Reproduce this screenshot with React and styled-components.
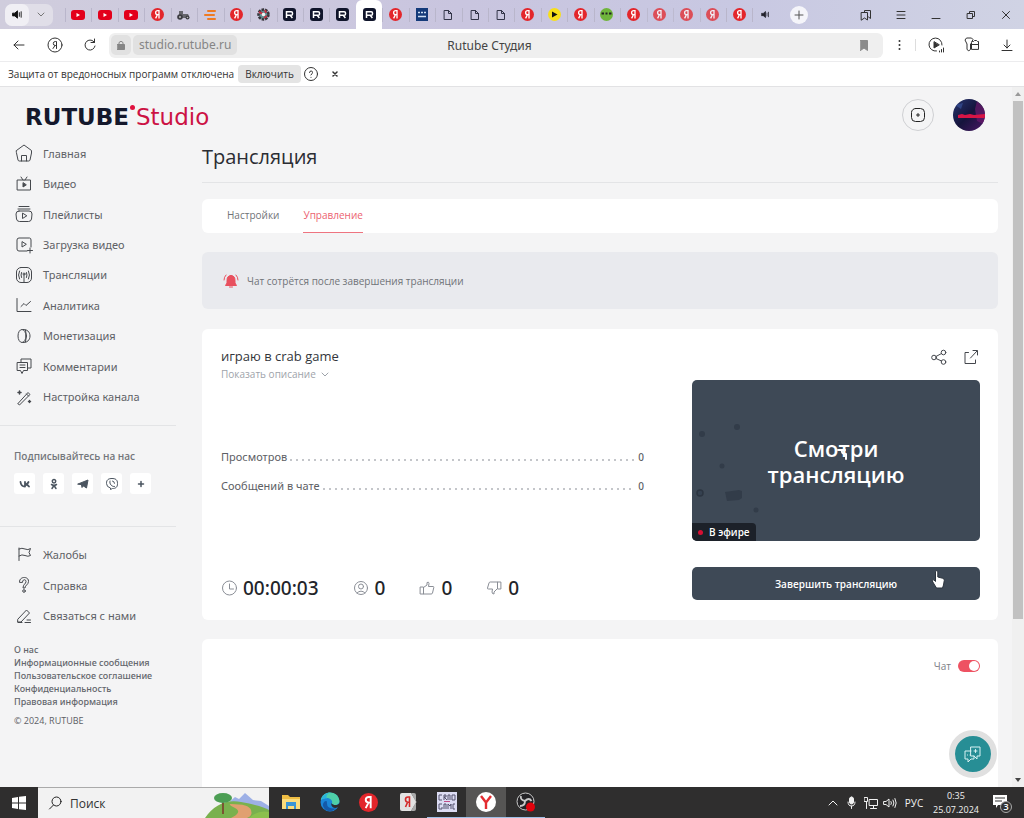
import React from "react";
import styled, { createGlobalStyle, css } from "styled-components";

const GlobalStyle = createGlobalStyle`
  *, *::before, *::after { box-sizing: border-box; }
  html, body { margin: 0; height: 100%; overflow: hidden; }
  body { font-family: "Open Sans", "Noto Sans", sans-serif; font-size: 12px; color: #5d6065; background: #f4f4f5; }
  button, input { font: inherit; color: inherit; }
  button { background: none; border: 0; padding: 0; cursor: pointer; }
  a { color: inherit; text-decoration: none; }
  h1, h2, h3, p, ul, dl, dd { margin: 0; padding: 0; font-weight: inherit; }
  ul { list-style: none; }
  svg { display: block; flex: none; }
`;

const wideSans = `"Noto Sans", "Open Sans", sans-serif`;

/* ---------- shared ---------- */

const Svg = ({ size = 18, w, h, box, width = 1, fill = "none", stroke = "currentColor", children }) => (
  <svg
    width={w || size}
    height={h || size}
    viewBox={box || `0 0 ${w || size} ${h || size}`}
    fill={fill}
    stroke={stroke}
    strokeWidth={width}
    strokeLinecap="round"
    strokeLinejoin="round"
    aria-hidden="true"
  >
    {children}
  </svg>
);

const Screen = styled.div`
  display: flex;
  flex-direction: column;
  height: 100vh;
  background: #f4f4f5;
`;

/* ---------- browser tabs ---------- */

const TabStrip = styled.div`
  display: flex;
  flex: none;
  height: 29px;
  align-items: center;
  padding-right: 1px;
  background: linear-gradient(90deg, #d0cddd 0%, #c9c5df 45%, #c8c8e2 72%, #d0d3e4 100%);
`;

const SoundGroup = styled.div`
  display: flex;
  flex: none;
  width: 48px;
  height: 22px;
  margin: 0 12px 0 5px;
  border-radius: 7px;
  background: #e0dee8;
  color: #222;
`;

const SoundButton = styled.button`
  display: grid;
  place-items: center;
  flex: 1;
  border-radius: 7px;
  color: ${(p) => (p.$on ? "#111" : "#777")};
  background: ${(p) => (p.$on ? "#f0eff4" : "transparent")};
`;

const TabList = styled.div`
  display: flex;
  flex: 1;
  height: 29px;
`;

const Tab = styled.button`
  display: grid;
  place-items: center;
  flex: 1;
  min-width: 0;
  color: #22222c;
  opacity: ${(p) => (p.$faded ? 0.75 : 1)};
  background: linear-gradient(#b9b6cb, #b9b6cb) no-repeat left center / 1px 14px;
  ${(p) =>
    p.$active &&
    css`
      background: #fff;
      border-radius: 6px 6px 0 0;
    `}
`;

const NewTab = styled.button`
  display: grid;
  place-items: center;
  flex: none;
  width: 18px;
  height: 18px;
  margin: 0 40px 0 11px;
  border-radius: 50%;
  background: #f5f5fa;
  color: #555;
`;

const WindowButton = styled.button`
  display: grid;
  place-items: center;
  flex: none;
  width: 35px;
  height: 29px;
  color: #333;
`;

const YaIcon = ({ size = 13 }) => (
  <svg width={size} height={size} viewBox="0 0 13 13" aria-hidden="true">
    <circle cx="6.500" cy="6.500" r="6.500" fill="#e3262b" />
    <path d="M8 10.400V2.700H6.800C5.300 2.700 4.600 3.500 4.600 4.700S5.300 6.600 6.800 6.600H8M6.400 6.700L4.600 10.400" fill="none" stroke="#fff" strokeWidth="1.300" />
  </svg>
);

const TubeIcon = () => (
  <svg width="14" height="10" viewBox="0 0 14 10" aria-hidden="true">
    <rect width="14" height="10" rx="3" fill="#e3001b" />
    <path d="M5.500 3v4l3.500-2z" fill="#fff" />
  </svg>
);

const RIcon = () => (
  <svg width="13" height="13" viewBox="0 0 13 13" aria-hidden="true">
    <rect width="13" height="13" rx="3" fill="#10152b" />
    <path d="M3.500 10V3.800h4.700q1.300 0 1.300 1.300v.8q0 1.300-1.300 1.300H3.500M7.200 7.300L9.400 10" fill="none" stroke="#fff" strokeWidth="1.500" />
  </svg>
);

const FileIcon = () => (
  <Svg w={10} h={12} stroke="#333548">
    <path d="M1.500 1.500h4l3 3v6h-7zM5.500 1.500v3h3" />
  </Svg>
);

const TractorIcon = () => (
  <svg width="13" height="10" viewBox="0 0 13 10" aria-hidden="true">
    <path d="M2 1h4v3h5l1 2v2H2z" fill="#66666c" />
    <circle cx="3" cy="7" r="2.800" fill="#3c3c42" />
    <circle cx="10.500" cy="7.500" r="2" fill="#3c3c42" />
    <circle cx="3" cy="7" r="1" fill="#bbb" />
    <circle cx="10.500" cy="7.500" r=".8" fill="#bbb" />
  </svg>
);

const StripesIcon = () => (
  <Svg w={12} h={12} stroke="#ee7a22" width={2}>
    <path d="M4 2h7M1 6h9M4 10h7" />
  </Svg>
);

const GearIcon = () => (
  <svg width="13" height="13" viewBox="0 0 13 13" aria-hidden="true">
    <circle cx="6.500" cy="6.500" r="5" fill="#5f8f93" stroke="#38343b" strokeWidth="2.500" strokeDasharray="2.500 1" />
    <path d="M2 4l4 2M8 2l1 3M7 10l3-2" stroke="#c33244" strokeWidth="2" />
    <circle cx="6.500" cy="6.500" r="1.800" fill="#f2f2f2" />
  </svg>
);

const BlueIcon = () => (
  <svg width="12" height="13" viewBox="0 0 12 13" aria-hidden="true">
    <rect width="12" height="13" fill="#143a7a" />
    <path d="M2 4.500h2M5 4.500h2M8 4.500h2M2 8.500h8" stroke="#cfe0f5" strokeWidth="1.500" />
  </svg>
);

const PlayYellow = () => (
  <svg width="13" height="13" viewBox="0 0 13 13" aria-hidden="true">
    <circle cx="6.500" cy="6.500" r="6.500" fill="#f8df1a" />
    <path d="M4 3.500v6l5.500-3z" fill="#111" />
  </svg>
);

const GreenIcon = () => (
  <svg width="13" height="13" viewBox="0 0 13 13" aria-hidden="true">
    <circle cx="6.500" cy="6.500" r="6.500" fill="#6fb53c" />
    <path d="M1.500 5.500h2.500M5.500 5.500h2M9 5.500h2.500" stroke="#222" strokeWidth="1.800" />
  </svg>
);

const SpeakerIcon = ({ size = 11 }) => (
  <Svg size={size} box="0 0 12 12">
    <path d="M1 4.500h2L6 2v8L3 7.500H1z" fill="currentColor" />
    <path d="M8 4v4M10 3v6" />
  </Svg>
);

const SmallSpeaker = () => <SpeakerIcon size={9} />;

const TABS = [
  ["YouTube", TubeIcon], ["YouTube", TubeIcon], ["YouTube", TubeIcon], ["Яндекс", YaIcon],
  ["Трактор", TractorIcon], ["Лента", StripesIcon], ["Яндекс", YaIcon], ["Настройки", GearIcon],
  ["Rutube", RIcon], ["Rutube", RIcon], ["Rutube", RIcon], ["Rutube Студия", RIcon, "active"],
  ["Яндекс", YaIcon], ["Сайт", BlueIcon], ["Файл", FileIcon], ["Файл", FileIcon], ["Файл", FileIcon],
  ["Яндекс", YaIcon], ["Музыка", PlayYellow], ["Яндекс", YaIcon], ["Игра", GreenIcon],
  ["Яндекс", YaIcon], ["Яндекс", YaIcon, "faded"], ["Яндекс", YaIcon, "faded"],
  ["Яндекс", YaIcon, "faded"], ["Яндекс", YaIcon], ["Звук", SmallSpeaker],
];

/* ---------- address bar ---------- */

const Toolbar = styled.div`
  display: flex;
  flex: none;
  align-items: center;
  height: 33px;
  background: #fff;
  border-bottom: 1px solid #ececee;
  color: #333;
`;

const ToolButton = styled.button`
  display: grid;
  place-items: center;
  flex: none;
  width: ${(p) => p.$w || 35}px;
  height: 28px;
`;

const AddressBar = styled.div`
  display: grid;
  grid-template-columns: 1fr auto 1fr;
  align-items: center;
  flex: 1;
  height: 25px;
  margin-left: 2px;
  padding: 0 15px 0 2px;
  border-radius: 6px;
  background: #efefef;
`;

const AddressStart = styled.div`
  display: flex;
  gap: 2px;
`;

const Chip = styled.button`
  display: grid;
  place-items: center;
  height: 20px;
  padding: 0 6px;
  border-radius: 5px;
  background: #e1e1e1;
  color: #858585;
  font-family: ${wideSans};
  font-size: 12px;
  line-height: 18px;
`;

const PageTitle = styled.span`
  font-family: ${wideSans};
  font-size: 12px;
  color: #444;
`;

const AddressEnd = styled.button`
  justify-self: end;
  color: #8b8b8b;
`;

const ToolDivider = styled.span`
  width: 1px;
  height: 12px;
  background: #ddd;
`;

const Notice = styled.div`
  display: flex;
  flex: none;
  align-items: center;
  height: 25px;
  padding-left: 8px;
  background: #fff;
  border-bottom: 1px solid #e2e2e4;
  color: #333;
  font-size: 10px;
`;

const NoticeButton = styled.button`
  height: 18px;
  margin: 0 3px 0 4px;
  padding: 0 7px;
  border-radius: 4px;
  background: #e4e4e4;
  line-height: 18px;
`;

const NoticeIconButton = styled.button`
  display: grid;
  place-items: center;
  width: ${(p) => p.$w}px;
  height: 18px;
`;

/* ---------- studio page ---------- */

const Viewport = styled.div`
  position: relative;
  display: flex;
  flex: 1;
  min-height: 0;
  overflow: hidden;
`;

const Page = styled.div`
  flex: 1;
  min-width: 0;
  height: 100%;
  overflow: hidden;
`;

const Header = styled.header`
  display: flex;
  align-items: center;
  gap: 19px;
  padding: 12px 27px 0 25px;
  height: 44px;
`;

const Logo = styled.a`
  display: flex;
  align-items: center;
  margin-right: auto;
  padding-top: 4px;
  font: bold 23px/24px "DejaVu Sans", sans-serif;
  color: #14182c;
`;

const LogoDot = styled.span`
  width: 5px;
  height: 5px;
  margin: 0 1px 20px;
  border-radius: 50%;
  background: #e0123f;
`;

const LogoStudio = styled.span`
  font-weight: 400;
  color: #cc1244;
`;

const RoundButton = styled.button`
  display: grid;
  place-items: center;
  width: 32px;
  height: 32px;
  border-radius: 50%;
  border: ${(p) => (p.$bare ? "0" : "1px solid #cfd0d3")};
  color: #222;
  overflow: hidden;
`;

const Columns = styled.div`
  display: grid;
  grid-template-columns: 202px minmax(0, 1fr);
  padding-right: 14px;
`;

const Sidebar = styled.aside`
  width: 176px;
  padding-top: 7px;
`;

const NavList = styled.ul`
  display: flex;
  flex-direction: column;
  height: ${(p) => p.$h}px;
`;

const NavItem = styled.li`
  display: flex;
  flex: 1;
`;

const NavLink = styled.a`
  display: flex;
  align-items: center;
  gap: 10px;
  padding-left: 15px;
  color: #5e6166;
  font-family: ${wideSans};
  font-size: 11px;
  svg { color: #45484d; }
`;

const Social = styled.section`
  height: 102px;
  margin: 13px 0 12px;
  padding: 23px 0 0 14px;
  border: solid #e3e4e6;
  border-width: 1px 0;
`;

const SocialTitle = styled.h3`
  font-size: 10px;
  line-height: 14px;
  font-weight: 600;
  color: #74777c;
`;

const SocialRow = styled.div`
  display: flex;
  gap: 8px;
  margin-top: 10px;
`;

const SocialLink = styled.a`
  display: grid;
  place-items: center;
  width: 21px;
  height: 21px;
  border-radius: 3px;
  background: #fff;
  color: #4b5560;
`;

const FooterLinks = styled.ul`
  margin: 12px 0 6px 14px;
  font-family: ${wideSans};
  font-size: 9px;
  line-height: 13px;
  font-weight: 500;
  color: #63666c;
  white-space: nowrap;
`;

const Copyright = styled.p`
  margin-left: 14px;
  font-size: 9px;
  line-height: 13px;
`;

const Title = styled.h1`
  height: 52px;
  padding-top: 12px;
  border-bottom: 1px solid #e3e4e6;
  font-size: 20px;
  line-height: 28px;
  font-weight: 500;
  color: #2b2d33;
`;

const Card = styled.section`
  border-radius: 6px;
  background: #fff;
`;

const TabsCard = styled(Card).attrs({ as: "nav" })`
  display: flex;
  gap: 24px;
  height: 34px;
  margin-top: 16px;
  padding-left: 25px;
`;

const TabLink = styled.a`
  border-bottom: 1px solid ${(p) => (p.$active ? "#ee7480" : "transparent")};
  color: ${(p) => (p.$active ? "#ec6270" : "#707378")};
  font-size: 10px;
  line-height: 33px;
`;

const Banner = styled.div`
  display: flex;
  align-items: center;
  gap: 8px;
  height: 57px;
  margin: 19px 0 20px;
  padding-left: 21px;
  border-radius: 6px;
  background: #e9eaee;
  color: #707378;
  font-size: 10px;
`;

const StreamCard = styled(Card)`
  display: grid;
  grid-template-columns: minmax(0, 423fr) minmax(0, 288fr);
  gap: 48px;
  height: 291px;
  padding: 18px 18px 19px 19px;
`;

const Info = styled.div`
  display: flex;
  flex-direction: column;
`;

const StreamTitle = styled.h2`
  font-size: 13px;
  line-height: 18px;
  font-weight: 500;
  color: #33363b;
`;

const Describe = styled.button`
  display: flex;
  align-items: center;
  gap: 5px;
  height: 18px;
  color: #9ea3aa;
  font-size: 10px;
`;

const Facts = styled.dl`
  display: grid;
  gap: 11px;
  margin-top: 65px;
  font-family: ${wideSans};
  font-size: 11px;
`;

const Fact = styled.div`
  display: flex;
  line-height: 18px;
`;

const Leader = styled.span`
  flex: 1;
  height: 18px;
  margin: 0 3px 0 2px;
  background: radial-gradient(circle at 2px 12px, #c4c6ca 0 1px, transparent 1px) 0 0 / 6px 18px repeat-x;
`;

const FactValue = styled.dd`
  font-size: 10px;
  font-weight: 500;
`;

const Metrics = styled.ul`
  display: flex;
  gap: 34px;
  margin-top: auto;
`;

const Metric = styled.li`
  display: flex;
  align-items: center;
  gap: 6px;
  font-family: ${wideSans};
  font-size: 19px;
  line-height: 26px;
  font-weight: 500;
  color: #222429;
  svg { color: #8a8e96; }
`;

const Side = styled.div`
  display: flex;
  flex-direction: column;
`;

const Actions = styled.div`
  display: flex;
  justify-content: flex-end;
  gap: 14px;
  height: 33px;
  padding: 1px 0 14px;
  color: #44474d;
`;

const Preview = styled.div`
  position: relative;
  display: grid;
  place-items: center;
  height: 161px;
  border-radius: 5px;
  overflow: hidden;
  background: #3e4956;
  color: #fff;
  text-align: center;
  font-size: 22px;
  line-height: 26px;
  font-weight: 600;
`;

const PreviewArt = styled.div`
  position: absolute;
  left: 4px;
  top: 36px;
`;

const Pointer = styled.span`
  position: absolute;
  left: 145px;
  top: 66px;
`;

const Live = styled.span`
  position: absolute;
  left: 0;
  bottom: 0;
  display: flex;
  align-items: center;
  gap: 6px;
  height: 18px;
  padding: 0 6px;
  border-radius: 0 4px 0 0;
  background: #1c2129;
  font-size: 10px;
  line-height: 18px;
`;

const LiveDot = styled.i`
  width: 5px;
  height: 5px;
  border-radius: 50%;
  background: #d80f33;
`;

const StopButton = styled.button`
  position: relative;
  height: 33px;
  margin-top: 26px;
  border-radius: 5px;
  background: #3e4956;
  color: #fff;
  font-size: 10px;
  font-weight: 600;
`;

const HandCursor = styled.span`
  position: absolute;
  right: 34px;
  top: 2px;
`;

const ChatCard = styled(Card)`
  height: 300px;
  margin-top: 19px;
  padding: 19px 18px;
`;

const ChatToggle = styled.label`
  display: flex;
  justify-content: flex-end;
  align-items: center;
  gap: 7px;
  font-size: 10px;
  line-height: 16px;
  color: #7d8087;
`;

const Switch = styled.input`
  appearance: none;
  display: flex;
  justify-content: flex-end;
  width: 22px;
  height: 12px;
  margin: 0;
  padding: 1px;
  border-radius: 6px;
  background: #ee5262;
  &::before {
    content: "";
    width: 10px;
    height: 10px;
    border-radius: 50%;
    background: #fff;
  }
`;

const Helper = styled.button`
  position: absolute;
  right: 27px;
  bottom: 9px;
  display: grid;
  place-items: center;
  width: 48px;
  height: 48px;
  border: 6px solid #e0e0e0;
  border-radius: 50%;
  background: #278e95;
  color: #d9f2f3;
`;

const Scrollbar = styled.div`
  display: flex;
  flex-direction: column;
  align-items: center;
  flex: none;
  width: 12px;
  background: #f0f0f0;
`;

const Thumb = styled.div`
  flex: 518;
  width: 10px;
  background: #c1c1c1;
`;

const Rest = styled.div`
  flex: 154;
`;

const Arrow = styled.span`
  display: grid;
  place-items: center;
  height: 14px;
  color: ${(p) => (p.$dark ? "#444" : "#999")};
`;

/* ---------- taskbar ---------- */

const Taskbar = styled.footer`
  display: flex;
  flex: none;
  height: 31px;
  background: #2f2e2e;
  color: #f1f1f1;
`;

const Start = styled.button`
  display: grid;
  place-items: center;
  flex: none;
  width: 38px;
`;

const Search = styled.label`
  display: flex;
  align-items: center;
  flex: none;
  gap: 8px;
  width: 231px;
  padding-left: 10px;
  background: #f2f2f2;
  color: #222;
  border-top: 1px solid #aaa;
  overflow: hidden;
`;

const SearchInput = styled.input`
  flex: 1;
  min-width: 0;
  padding: 0;
  border: 0;
  outline: 0;
  background: none;
  font-size: 12px;
  &::placeholder { color: #333; opacity: 1; }
`;

const Apps = styled.div`
  display: flex;
  padding-left: 2px;
`;

const AppButton = styled.button`
  display: grid;
  place-items: center;
  width: ${(p) => (p.$active ? 40 : 39)}px;
  background: ${(p) => (p.$active ? "#565554" : "transparent")};
  border-bottom: 1px solid ${(p) => (p.$open ? "#9dbfe6" : "transparent")};
`;

const Tray = styled.div`
  display: flex;
  align-items: center;
  gap: 4px;
  margin-left: auto;
  padding-right: 6px;
  font-size: 10px;
`;

const TrayButton = styled.button`
  display: grid;
  place-items: center;
  width: ${(p) => p.$w || 15}px;
  height: 31px;
`;

const Clock = styled.time`
  text-align: center;
  line-height: 14px;
  font-size: 9px;
  font-weight: 500;
  width: 50px;
`;

/* ---------- navigation data ---------- */

const NAV = [
  ["Главная", <path d="M1.500 6.500L9 1l7.500 5.500v2.500L15 16q-.3 1-1.300 1H4.300q-1 0-1.300-1L1.500 9zM6.500 17v-5.500h5V17" />],
  ["Видео", <><path d="M2.500 5h13v10h-13zM6 2l2 3M12 2l-2 3" /><path d="M8 8v4l3-2z" fill="currentColor" /></>],
  ["Плейлисты", <><path d="M4 1.500h10M3 4h12" /><path d="M4 6h10q3 0 3 3l-.5 5q-.5 2.500-3 2.500h-9Q2 16.500 1.500 14L1 9q0-3 3-3z" /><path d="M7.500 8.500v5l4-2.500z" /></>],
  ["Загрузка видео", <><path d="M12 15H4q-2 0-2-2V4q0-2 2-2h10.500q1.500 0 1.500 2v7M15 12v5M12.500 14.500h5" /><path d="M7 6v5l4-2.500z" /></>],
  ["Трансляции", <><rect x="1.500" y="1.500" width="15" height="15" rx="4.500" /><path d="M9 9v7M4.500 5q-2 4 0 8M13.500 5q2 4 0 8M6.500 6.500q-1 2.500 0 5M11.500 6.500q1 2.500 0 5" /><circle cx="9" cy="8" r="1" /></>],
  ["Аналитика", <path d="M2 2.500V15.500h14M6 10.500l3-3 2 2 4.500-4" />],
  ["Монетизация", <><ellipse cx="7" cy="9" rx="4" ry="6.500" /><path d="M8 2.500c4-.5 7 2.500 7 6.500s-3 7-7 6.500M10.500 3q2 6 0 12" /></>],
  ["Комментарии", <><path d="M6 5V2h10v9h-3" /><path d="M2.500 5.500h10v8h-4L7 16.500l-1.500-3h-3zM5 8h5M5 10.500h5" /></>],
  ["Настройка канала", <><path d="M3 15.500l10-11 2 2-10 10zM11.500 6l2 2" /><path d="M4.500 3v3M3 4.500h3M14.500 12.500v2M13.500 13.500h2" strokeWidth="1.500" /></>],
];

const SUPPORT = [
  ["Жалобы", <path d="M4 3v12.500M4 4q3-1.500 6 0t5.500-.5l-1.500 4 1.500 3q-2.500 1.500-5.500 0t-6 .5" />],
  ["Справка", <><path d="M4.500 6c-.5-6 9.500-6 9-.5C13.300 9 10 9 10 12H8c0-4 3-4 3-6.500 0-2.500-3.500-2.500-3.500.5z" /><circle cx="9" cy="15" r="1.300" /></>],
  ["Связаться с нами", <path d="M3 12L11.500 3l3 3L6 15H3zM10 15.500h5.500M12 13h3.500M3 15.500h4" />],
];

const LEGAL = ["О нас", "Информационные сообщения", "Пользовательское соглашение", "Конфиденциальность", "Правовая информация"];

const SOCIAL = [
  ["ВКонтакте", <path d="M1.500 4c.3 3 1.700 4.500 4.500 4.500V4M6 6.500c1.500 0 2.800-1 3.500-2.500M6.500 6.500C8.300 6.800 9.300 7.500 10 8.500" strokeWidth="1.800" />],
  ["Одноклассники", <path d="M6 1.500a1.700 1.700 0 100 3.400 1.700 1.700 0 000-3.400M3.500 6.500q2.500 1.500 5 0M6 7.500L4 10.500M6 7.500l2 3" strokeWidth="1.500" />],
  ["Telegram", <path d="M1 6l10-4-1.500 8L6.500 8 5 9.500 4.500 7z" fill="currentColor" />],
  ["Viber", <><path d="M6 .5c3.500 0 5.500 1 5.500 5s-2 5-5 5L4.500 11.500V10Q.5 9 .5 5.500c0-4 2-5 5.500-5z" /><path d="M4 3c-1 3 2 6 4.500 5.500M6.500 3q2 .3 2 2.300" /></>],
  ["Ещё", <path d="M6 3.500v5M3.500 6h5" strokeWidth="1.500" />],
];

const METRICS = [
  ["00:00:03", <><circle cx="8.500" cy="8" r="7" /><path d="M8.500 4v5h4" /></>],
  ["0", <><circle cx="8" cy="8" r="6.500" /><circle cx="8" cy="6.500" r="2.500" /><path d="M4 13q4-4 8 0" /></>],
  ["0", <path d="M1.500 7h3v7h-3zM4.500 7.500L8 5V2.500q2-1 2 1L9.500 6.500H14q1 0 .8 1L13.500 13q-.3 1-1.300 1H4.500" />],
  ["0", <path d="M14.500 9h-3V2h3zM11.500 8.500L8 12v2q-2 0-2-2l.5-3H2.500q-1.300 0-1-1L3 3q.3-1 1.300-1h7.200" />],
];

const NavGroup = ({ items, height }) => (
  <NavList $h={height}>
    {items.map(([label, art]) => (
      <NavItem key={label}>
        <NavLink href="#">
          <Svg>{art}</Svg>
          {label}
        </NavLink>
      </NavItem>
    ))}
  </NavList>
);

const BrowserChrome = () => (
  <>
    <TabStrip>
      <SoundGroup>
        <SoundButton $on aria-label="Звук"><SpeakerIcon /></SoundButton>
        <SoundButton aria-label="Вкладки"><Svg w={8} h={5}><path d="M1 1l3 3 3-3" /></Svg></SoundButton>
      </SoundGroup>
      <TabList>
        {TABS.map(([name, Icon, state], i) => (
          <Tab key={i} aria-label={name} $active={state === "active"} $faded={state === "faded"}>
            <Icon />
          </Tab>
        ))}
      </TabList>
      <NewTab aria-label="Новая вкладка"><Svg size={10}><path d="M5 1v8M1 5h8" /></Svg></NewTab>
      <WindowButton aria-label="Закладки"><Svg size={12}><path d="M4.500 3V1.500h6v8L8.500 8M1.500 3.500h6v7.500L4.500 9l-3 2z" /></Svg></WindowButton>
      <WindowButton aria-label="Меню"><Svg size={10}><path d="M1 1.500h8M1 5h8M1 8.500h8" /></Svg></WindowButton>
      <WindowButton aria-label="Свернуть"><Svg size={10}><path d="M1 8.500h8" /></Svg></WindowButton>
      <WindowButton aria-label="Развернуть"><Svg size={10}><path d="M1.500 3.500h5v5h-5zM3.500 3.500v-2h5v5h-2" /></Svg></WindowButton>
      <WindowButton aria-label="Закрыть"><Svg size={10}><path d="M1.500 1.500l7 7M8.500 1.500l-7 7" /></Svg></WindowButton>
    </TabStrip>
    <Toolbar>
      <ToolButton $w={37} aria-label="Назад"><Svg size={14}><path d="M2 7h10M6 3L2 7l4 4" /></Svg></ToolButton>
      <ToolButton aria-label="Яндекс"><Svg size={16}><circle cx="8" cy="8" r="7" /><path d="M9.500 11.500v-7H8.300q-2 0-2 2t2 2h1.200M8 8.500l-2 3" /></Svg></ToolButton>
      <ToolButton aria-label="Обновить"><Svg size={14}><path d="M12 8a5 5 0 11-2-5l1.500 1.500M11.500 1v3.500H8" /></Svg></ToolButton>
      <AddressBar>
        <AddressStart>
          <Chip aria-label="Безопасность">
            <Svg w={8} h={10}><rect x="0.500" y="4.500" width="7" height="5" fill="currentColor" /><path d="M2 4V2.500q2-2.500 4 0V4" /></Svg>
          </Chip>
          <Chip>studio.rutube.ru</Chip>
        </AddressStart>
        <PageTitle>Rutube Студия</PageTitle>
        <AddressEnd aria-label="В закладки"><Svg w={8} h={11}><path d="M.5.500h7v10L4 8 .5 10.500z" fill="currentColor" /></Svg></AddressEnd>
      </AddressBar>
      <ToolButton $w={32} aria-label="Ещё"><Svg w={3} h={12} stroke="none" fill="currentColor"><circle cx="1.500" cy="2" r="1" /><circle cx="1.500" cy="6" r="1" /><circle cx="1.500" cy="10" r="1" /></Svg></ToolButton>
      <ToolDivider />
      <ToolButton $w={39} aria-label="Плеер"><Svg size={16}><path d="M8.500 14A6.500 6.500 0 1114 8" /><path d="M6 5v6l5-3z" fill="currentColor" /><path d="M11.500 14v1M13.500 12.500v2.500M15.500 11V15" /></Svg></ToolButton>
      <ToolButton $w={34} aria-label="Коллекции"><Svg size={16}><path d="M8 4.500L9 2.500 7.500 1h-5L1 3l2 4v5.500q1.800 2.500 3.500 0V7M7.500 12V5.500q0-1 1-1h1l1-1h2l1 1h1v7.500zM8 7.500h6" /></Svg></ToolButton>
      <ToolButton aria-label="Загрузки"><Svg size={12}><path d="M6 1v8M3 6l3 3 3-3M1 11.500h10" /></Svg></ToolButton>
    </Toolbar>
    <Notice>
      Защита от вредоносных программ отключена
      <NoticeButton>Включить</NoticeButton>
      <NoticeIconButton $w={14} aria-label="Справка"><Svg size={14}><circle cx="7" cy="7" r="6.500" /><path d="M5.500 5.500q.2-1.700 1.700-1.500t1.300 1.500Q8.400 6.500 7 8M7 10.300v.1" /></Svg></NoticeIconButton>
      <NoticeIconButton $w={35} aria-label="Закрыть"><Svg size={6} width={1.5}><path d="M1 1l4 4M5 1L1 5" /></Svg></NoticeIconButton>
    </Notice>
  </>
);

const SidePanel = () => (
  <Sidebar>
    <NavGroup items={NAV} height={274} />
    <Social>
      <SocialTitle>Подписывайтесь на нас</SocialTitle>
      <SocialRow>
        {SOCIAL.map(([name, art]) => (
          <SocialLink key={name} href="#" aria-label={name}><Svg size={12}>{art}</Svg></SocialLink>
        ))}
      </SocialRow>
    </Social>
    <NavGroup items={SUPPORT} height={92} />
    <FooterLinks>
      {LEGAL.map((t) => <li key={t}><a href="#">{t}</a></li>)}
    </FooterLinks>
    <Copyright>© 2024, RUTUBE</Copyright>
  </Sidebar>
);

const StreamPanel = () => (
  <StreamCard>
    <Info>
      <StreamTitle>играю в crab game</StreamTitle>
      <Describe>Показать описание<Svg w={8} h={5}><path d="M1 1l3 3 3-3" /></Svg></Describe>
      <Facts>
        <Fact><dt>Просмотров</dt><Leader /><FactValue>0</FactValue></Fact>
        <Fact><dt>Сообщений в чате</dt><Leader /><FactValue>0</FactValue></Fact>
      </Facts>
      <Metrics>
        {METRICS.map(([value, art], i) => (
          <Metric key={i}><Svg size={16}>{art}</Svg>{value}</Metric>
        ))}
      </Metrics>
    </Info>
    <Side>
      <Actions>
        <button aria-label="Поделиться"><Svg><circle cx="4" cy="9.500" r="2.300" /><circle cx="13.500" cy="4.500" r="2.300" /><circle cx="13.500" cy="14" r="2.300" /><path d="M6 8.500l5.500-3M6 10.500l5.500 2.500" /></Svg></button>
        <button aria-label="Открыть"><Svg><path d="M6.500 4.500H3v11h10.500V12M8.500 10L15 3M11 2.500h4.500V7" /></Svg></button>
      </Actions>
      <Preview>
        <PreviewArt>
          <Svg w={70} h={110} stroke="none" fill="#323c49">
            <circle cx="6" cy="18" r="3" /><circle cx="41" cy="11" r="3" /><circle cx="26" cy="50" r="2.500" /><circle cx="60" cy="94" r="2.500" />
            <circle cx="4" cy="77" r="3" stroke="#2c3541" fill="#354150" strokeWidth="1.500" />
            <path d="M29 76l14-2 3 1v7l-3 2-12 1z" />
          </Svg>
        </PreviewArt>
        <span>Смотри<br />трансляцию</span>
        <Pointer><Svg w={14} h={16} stroke="#fff" width={2}><path d="M1 4h7M5 4q-1 4 4 4v5" /></Svg></Pointer>
        <Live><LiveDot />В эфире</Live>
      </Preview>
      <StopButton>
        Завершить трансляцию
        <HandCursor>
          <Svg w={15} h={20} stroke="#2b333d" fill="#fff"><path d="M4.500 12V2.500q1.200-1.500 2.300 0V8l5 1.300q1.700.4 1.500 2L12.500 16l-1 3h-6L3 15 1 11.500q1-1.500 3.500.5z" /></Svg>
        </HandCursor>
      </StopButton>
    </Side>
  </StreamCard>
);

const SystemBar = () => (
  <Taskbar>
    <Start aria-label="Пуск">
      <Svg size={14} stroke="none" fill="#fff"><path d="M0 2l6-1v5.500H0zM7 .8L14 0v6.500H7zM0 7.500h6V13l-6-1zM7 7.500h7V14l-7-.8z" /></Svg>
    </Start>
    <Search>
      <Svg size={14}><circle cx="8.500" cy="5.500" r="4.500" /><path d="M5.500 9L1.500 13" /></Svg>
      <SearchInput placeholder="Поиск" aria-label="Поиск" />
      <svg width="64" height="30" viewBox="0 0 64 30" aria-hidden="true">
        <path d="M20 18L30 9l4 2 6-6 8 7 8 1 8 5v12H20z" fill="#9db0e6" />
        <path d="M0 30Q14 10 36 14T64 22v8z" fill="#79b14e" />
        <path d="M26 30Q38 24 30 20T26 16q18 0 20 6t-4 8z" fill="#e0a070" />
        <path d="M18 10v16" stroke="#7a5532" strokeWidth="2" />
        <ellipse cx="18" cy="10" rx="9" ry="5" fill="#4c9e54" />
        <path d="M44 30q8-8 20-6v6z" fill="#8cc04d" />
      </svg>
    </Search>
    <Apps>
      <AppButton aria-label="Проводник">
        <svg width="18" height="16" viewBox="0 0 18 16"><path d="M0 1h6l2 2h10v12H0z" fill="#efbd43" /><path d="M0 5h18v10H0z" fill="#fbdc7c" /><path d="M4 8h10v7h-2v-3H6v3H4z" fill="#3a95d5" /></svg>
      </AppButton>
      <AppButton aria-label="Edge">
        <svg width="20" height="20" viewBox="0 0 20 20">
          <circle cx="10" cy="10" r="9.500" fill="#1b86d8" />
          <path d="M.8 8C3-2 18-2 19.500 9c0 4.500-6 5-7.500 2.500 1.500-5-6-7.500-11.200-3.500z" fill="#4fd0a8" />
          <path d="M.8 8Q3 1 10 .5 5 3 7 6.500 3 6 .8 8z" fill="#2bb3dc" />
          <path d="M7 9.500q-1 8 9 7Q10 21.500 5 17.500 1 13 4.500 9.500 6 8.500 7 9.500z" fill="#1459a8" />
          <path d="M11.500 11c1.500 3 7 2.500 8 0v3.500q-4 2.500-7 .5-2-1.500-1-4z" fill="#2f2e2e" />
        </svg>
      </AppButton>
      <AppButton aria-label="Яндекс"><YaIcon size={19} /></AppButton>
      <AppButton aria-label="Яндекс Браузер">
        <svg width="18" height="18" viewBox="0 0 18 18"><path d="M1 2q0-2 2-2h9l5.500 9-5.500 9H3q-2 0-2-2z" fill="#e2e2e2" /><path d="M12 0h3q2 0 2 2v14q0 2-2 2h-3l5-9z" fill="#a9a9a9" /><path d="M10.500 14V4H9Q6.500 4 6.500 6.500T9 9.300h1.500M8.500 9.500L6.500 14" fill="none" stroke="#d32a2a" strokeWidth="1.600" /></svg>
      </AppButton>
      <AppButton $open aria-label="Crab Game">
        <svg width="20" height="20" viewBox="0 0 20 20"><rect width="20" height="20" fill="#dcdcf3" /><path d="M5 3H2v5h3M7 8V3h2v2H7l3 3M11 8V3h2v5M15 3v5h3V3zM5 12H2v5h3v-2M7 17v-5h2v5M11 17v-5l2 2 1-2v5M18 12h-2v5h2" fill="none" stroke="#55536f" /><path d="M7 9.500h6" stroke="#c04d88" /></svg>
      </AppButton>
      <AppButton $open $active aria-label="Браузер">
        <svg width="20" height="20" viewBox="0 0 20 20"><circle cx="10" cy="10" r="10" fill="#fff" /><path d="M5 4l5 6.500V17M15 4l-5 6.500" fill="none" stroke="#e32c30" strokeWidth="2.400" /></svg>
      </AppButton>
      <AppButton $open aria-label="OBS">
        <svg width="20" height="20" viewBox="0 0 20 20"><circle cx="9.500" cy="9.500" r="8.500" fill="#242326" stroke="#c9c9c9" /><path d="M9 9q-5-1-4-5M9 9q4-4 6.500 0M9 9q0 5-5 5" fill="none" stroke="#c9c9c9" strokeWidth="1.800" /><circle cx="14.500" cy="15" r="4.500" fill="#e2030d" /></svg>
      </AppButton>
    </Apps>
    <Tray>
      <TrayButton aria-label="Скрытые значки"><Svg w={10} h={6}><path d="M1 5l4-4 4 4" /></Svg></TrayButton>
      <TrayButton aria-label="Микрофон"><Svg w={9} h={13}><rect x="2.500" y="1" width="4" height="7" rx="2" fill="currentColor" /><path d="M1 6q0 4 3.500 4T8 6M4.500 10v2.500" /></Svg></TrayButton>
      <TrayButton aria-label="Сеть"><Svg w={14} h={12}><path d="M5.500 2.500h8v6h-8zM9.500 9v2M6.500 11.500h6M.5.500h3v4h-3zM2.500 5v6.500" /></Svg></TrayButton>
      <TrayButton aria-label="Громкость"><Svg w={14} h={12}><path d="M1 4.500h2L6 2v8L3 7.500H1zM8 4.500q1 1.500 0 3M10 3q2 3 0 6M12 1.500q2.500 4.500 0 9" /></Svg></TrayButton>
      <TrayButton $w={26}>РУС</TrayButton>
      <Clock>0:35<br />25.07.2024</Clock>
      <TrayButton $w={33} aria-label="Уведомления: 3">
        <svg width="20" height="20" viewBox="0 0 20 20"><path d="M1 2h14v10H6l-2 3v-3H1z" fill="#fff" /><path d="M3 5h10M3 8h7" stroke="#333" /><circle cx="14" cy="14" r="5.500" fill="#333" stroke="#aaa" /><text x="14" y="17" textAnchor="middle" fontSize="9" fontWeight="600" fill="#fff">3</text></svg>
      </TrayButton>
    </Tray>
  </Taskbar>
);

export default function App() {
  return (
    <Screen>
      <GlobalStyle />
      <BrowserChrome />
      <Viewport>
        <Page>
          <Header>
            <Logo href="#">RUTUBE<LogoDot /><LogoStudio>Studio</LogoStudio></Logo>
            <RoundButton aria-label="Добавить"><Svg size={16}><rect x="1.500" y="1.500" width="13" height="13" rx="4" /><path d="M8 6.500v3M6.500 8h3" /></Svg></RoundButton>
            <RoundButton $bare aria-label="Профиль">
              <svg width="32" height="32" viewBox="0 0 32 32">
                <defs><linearGradient id="sky" x1="0" y1="0" x2="1" y2="1"><stop offset="0" stopColor="#26356e" /><stop offset=".5" stopColor="#15143c" /><stop offset="1" stopColor="#4b1765" /></linearGradient></defs>
                <rect width="32" height="32" fill="url(#sky)" />
                <path d="M24 2l8 8v16l-8-4-2-12z" fill="#6a1a6c" opacity=".7" />
                <path d="M5 16l4-1 3 1 5-1 4 1 11-1v4H5z" fill="#d81546" />
                <path d="M2 6l8-2-2 6z" fill="#3a57a2" opacity=".6" />
              </svg>
            </RoundButton>
          </Header>
          <Columns>
            <SidePanel />
            <main>
              <Title>Трансляция</Title>
              <TabsCard>
                <TabLink href="#">Настройки</TabLink>
                <TabLink href="#" $active>Управление</TabLink>
              </TabsCard>
              <Banner>
                <Svg size={16} stroke="#e8505e"><path d="M8 2.500q4 0 4 5V10l1.500 2.500h-11L4 10V7.500q0-5 4-5zM6.500 14h3" fill="#e8505e" /><path d="M3 2Q1 4 1 7M13 2q2 2 2 5" /></Svg>
                Чат сотрётся после завершения трансляции
              </Banner>
              <StreamPanel />
              <ChatCard>
                <ChatToggle>Чат<Switch type="checkbox" defaultChecked /></ChatToggle>
              </ChatCard>
            </main>
          </Columns>
        </Page>
        <Scrollbar aria-hidden="true">
          <Arrow><Svg w={6} h={4} stroke="none" fill="currentColor"><path d="M0 4l3-4 3 4z" /></Svg></Arrow>
          <Thumb />
          <Rest />
          <Arrow $dark><Svg w={6} h={4} stroke="none" fill="currentColor"><path d="M0 0l3 4 3-4z" /></Svg></Arrow>
        </Scrollbar>
        <Helper aria-label="Помощь">
          <Svg size={20}><path d="M8 3h9v9h-3v3l-3-3H8zM8 7H2v8h3v3l3-3h3v-3M12.500 5.500v3M11 7h3M4.500 11h.1M7 11h.1" /></Svg>
        </Helper>
      </Viewport>
      <SystemBar />
    </Screen>
  );
}
